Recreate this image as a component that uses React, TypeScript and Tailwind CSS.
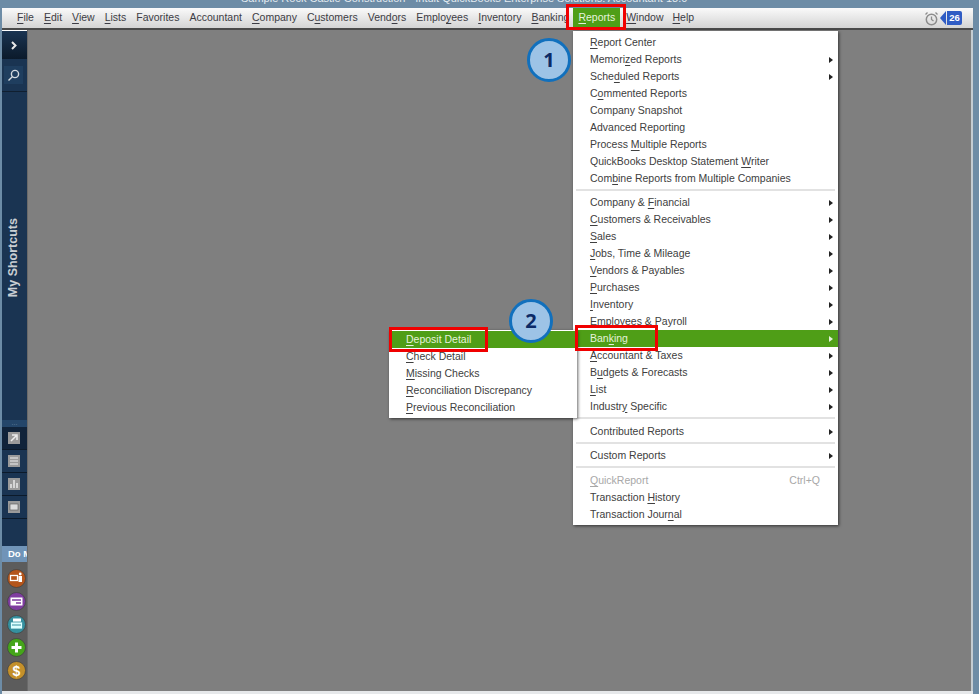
import React from "react";

type Entry = { label: string; u?: number; sub?: boolean; active?: boolean; disabled?: boolean; hint?: string };

const topMenu: Array<[string, number]> = [
  ["File", 0], ["Edit", 0], ["View", 0], ["Lists", 0], ["Favorites", -1], ["Accountant", -1],
  ["Company", 0], ["Customers", 1], ["Vendors", 4], ["Employees", 5], ["Inventory", 0], ["Banking", 0],
];

const groups: Entry[][] = [
  [
    { label: "Report Center", u: 0 },
    { label: "Memorized Reports", u: 6, sub: true },
    { label: "Scheduled Reports", u: 4, sub: true },
    { label: "Commented Reports", u: 1 },
    { label: "Company Snapshot" },
    { label: "Advanced Reporting" },
    { label: "Process Multiple Reports", u: 8 },
    { label: "QuickBooks Desktop Statement Writer", u: 29 },
    { label: "Combine Reports from Multiple Companies", u: 3 },
  ],
  [
    { label: "Company & Financial", u: 10, sub: true },
    { label: "Customers & Receivables", u: 0, sub: true },
    { label: "Sales", u: 0, sub: true },
    { label: "Jobs, Time & Mileage", u: 0, sub: true },
    { label: "Vendors & Payables", u: 0, sub: true },
    { label: "Purchases", u: 0, sub: true },
    { label: "Inventory", u: 0, sub: true },
    { label: "Employees & Payroll", u: 0, sub: true },
    { label: "Banking", u: 3, sub: true, active: true },
    { label: "Accountant & Taxes", u: 0, sub: true },
    { label: "Budgets & Forecasts", u: 1, sub: true },
    { label: "List", u: 0, sub: true },
    { label: "Industry Specific", u: 7, sub: true },
  ],
  [{ label: "Contributed Reports", sub: true }],
  [{ label: "Custom Reports", sub: true }],
  [
    { label: "QuickReport", u: 0, disabled: true, hint: "Ctrl+Q" },
    { label: "Transaction History", u: 12 },
    { label: "Transaction Journal", u: 16 },
  ],
];

const bankingItems: Entry[] = [
  { label: "Deposit Detail", u: 0, active: true },
  { label: "Check Detail", u: 0 },
  { label: "Missing Checks", u: 0 },
  { label: "Reconciliation Discrepancy", u: 0 },
  { label: "Previous Reconciliation", u: 0 },
];

const Mnemonic = ({ text, u }: { text: string; u?: number }) => {
  if (u === undefined || u < 0) return <span>{text}</span>;
  return (
    <span>
      {text.slice(0, u)}
      <span className="underline underline-offset-2">{text[u]}</span>
      {text.slice(u + 1)}
    </span>
  );
};

const Row = ({ item }: { item: Entry }) => (
  <div
    className={`flex h-[17px] items-center justify-between pr-[5px] pl-[17px] ${
      item.active ? "bg-[#4f9e17] text-[#e6f2dc]" : item.disabled ? "text-[#a8a8a8]" : "text-[#404040]"
    }`}
  >
    <Mnemonic text={item.label} u={item.u} />
    {item.sub && <span className={`h-0 w-0 border-y-[3.5px] border-l-[4px] border-y-transparent ${item.active ? "border-l-[#e6f2dc]" : "border-l-[#222]"}`} />}
    {item.hint && <span className="pr-[13px]">{item.hint}</span>}
  </div>
);

const Badge = ({ n, className }: { n: number; className: string }) => (
  <div
    className={`absolute flex h-[44px] w-[44px] items-center justify-center rounded-full border-[3px] border-[#1170bd] bg-[#9dc3e6] font-['Open_Sans',sans-serif] text-[20px] font-bold text-[#0c2a66] ${className}`}
  >
    {n}
  </div>
);

const RedBox = ({ className }: { className: string }) => (
  <div className={`pointer-events-none absolute border-[3px] border-[#f00000] ${className}`} />
);

const ToolIcon = ({ children, active }: { children: React.ReactNode; active?: boolean }) => (
  <div className={`flex h-[23px] items-center justify-center border-b border-[#0c1a2a] pr-[2px] ${active ? "bg-[#10233a]" : ""}`}>
    <svg width="12" height="12" viewBox="0 0 12 12">
      <rect width="12" height="12" fill="#9a9a9a" />
      {children}
    </svg>
  </div>
);

const RoundIcon = ({ bg, children }: { bg: string; children: React.ReactNode }) => (
  <svg width="19" height="19" viewBox="0 0 19 19">
    <circle cx="9.5" cy="9.5" r="9" fill={bg} stroke="#3a3a3a" strokeWidth="0.6" />
    {children}
  </svg>
);

export default function App() {
  return (
    <div className="relative flex h-[694px] w-[979px] flex-col overflow-hidden bg-[#6d8ca6] font-['Liberation_Sans',Arial,sans-serif] text-[10.5px]">
      {/* title bar, cut off by the screenshot */}
      <div className="relative h-[8px] shrink-0 overflow-hidden">
        <div className="absolute top-[-9px] left-[241px] whitespace-nowrap text-[11px] leading-[14px] text-[#e4ebf1]">
          Sample Rock Castle Construction - Intuit QuickBooks Enterprise Solutions: Accountant 18.0
        </div>
      </div>

      <div className="flex min-h-0 flex-1 flex-col pr-[6px] pl-[2px]">
        <div className="flex h-[22px] shrink-0 items-center border-b-2 border-[#4a4a4a] bg-gradient-to-b from-[#fafafa] to-[#d4d4d4] pl-[15px] text-[#3c3c44]">
          <div className="flex items-center gap-[10px]">
            {topMenu.map(([name, u]) => (
              <Mnemonic key={name} text={name} u={u} />
            ))}
          </div>
          <div className="ml-[4px] flex h-[20px] items-center bg-[#4f9e17] px-[5px] text-[#e6f2dc]">
            <Mnemonic text="Reports" u={0} />
          </div>
          <div className="ml-[6px] flex items-center gap-[9px]">
            <Mnemonic text="Window" u={0} />
            <Mnemonic text="Help" u={0} />
          </div>
          <div className="ml-auto mr-[11px] flex items-center gap-[1px]">
            <svg width="15" height="15" viewBox="0 0 15 15" fill="none" stroke="#8c8c8c">
              <circle cx="7.5" cy="8.5" r="5.2" strokeWidth="1.5" />
              <path d="M7.5 5.5v3l2 1.5M1.5 3.5l2-2M13.5 3.5l-2-2" strokeWidth="1.3" />
            </svg>
            <svg width="6" height="14" viewBox="0 0 6 14">
              <path d="M6 0v14L0 7z" fill="#2f5cc4" />
            </svg>
            <div className="flex h-[14px] w-[15px] items-center justify-center rounded-r-[2px] bg-[#2f5cc4] text-[9.5px] font-bold text-white">
              26
            </div>
          </div>
        </div>

        <div className="flex min-h-0 flex-1">
          <div className="flex w-[25px] shrink-0 flex-col border-t border-white bg-[#1a3452]">
            <div className="flex h-[28px] items-center justify-center bg-gradient-to-b from-[#1a3452] to-[#0b1a2b] pr-[2px]">
              <svg width="8" height="9" viewBox="0 0 8 9" fill="none" stroke="#e8e8e8" strokeWidth="2">
                <path d="M2 1l3.5 3.5L2 8" />
              </svg>
            </div>
            <div className="flex h-[33px] items-center justify-center border-b border-[#101f30] pr-[2px]">
              <div className="flex h-[18px] w-[19px] items-center justify-center bg-[#1f3e5f]">
                <svg width="13" height="13" viewBox="0 0 13 13" fill="none" stroke="#d5dbe0" strokeWidth="1.4">
                  <circle cx="8" cy="5" r="3.6" />
                  <path d="M5.3 7.7L1.5 11.5" />
                </svg>
              </div>
            </div>
            <div className="flex h-[205px] items-end justify-center pr-[2px]">
              <span className="rotate-180 whitespace-nowrap text-[12.5px] font-bold text-[#c9ced3] [writing-mode:vertical-rl]">My Shortcuts</span>
            </div>
            <div className="h-[123px]" />
            <div className="flex h-[7px] items-center justify-center bg-[#24466a] text-[6px] leading-none text-[#8fa5ba]">···</div>
            <ToolIcon active>
              <path d="M3 9l5-5M4 3h5v5" stroke="#eee" strokeWidth="1.5" fill="none" />
            </ToolIcon>
            <ToolIcon>
              <path d="M2 3h8M2 6h8M2 9h8" stroke="#eee" strokeWidth="1.2" />
            </ToolIcon>
            <ToolIcon>
              <path d="M3 10V6M6 10V2M9 10V5" stroke="#eee" strokeWidth="1.4" />
            </ToolIcon>
            <ToolIcon>
              <rect x="2" y="3" width="8" height="6" fill="#ddd" stroke="#555" strokeWidth="0.6" />
            </ToolIcon>
            <div className="h-[27px]" />
            <div className="flex h-[16px] items-center overflow-hidden whitespace-nowrap bg-[#7094b8] pl-[6px] text-[9.5px] font-bold text-white">
              Do More
            </div>
            <div className="flex flex-1 flex-col items-center gap-[4px] bg-[#5c5c5c] pt-[7px] pl-[3px]">
              <RoundIcon bg="#b4551b">
                <rect x="3.5" y="6.5" width="7" height="5" fill="none" stroke="#fff" strokeWidth="1.3" />
                <rect x="11.5" y="7" width="3.5" height="6" fill="#fff" />
                <circle cx="13.2" cy="5" r="1.4" fill="#fff" />
              </RoundIcon>
              <RoundIcon bg="#7f3da0">
                <rect x="3.5" y="5.5" width="12" height="8" fill="#fff" />
                <path d="M5 8h9M9 11h5" stroke="#7f3da0" strokeWidth="1.3" />
              </RoundIcon>
              <RoundIcon bg="#35909f">
                <rect x="6" y="3.5" width="8" height="4" fill="#fff" />
                <rect x="3.5" y="7" width="12" height="7" fill="#dff" stroke="#35909f" strokeWidth="0.8" />
                <path d="M5 10h9" stroke="#35909f" />
              </RoundIcon>
              <RoundIcon bg="#45a51a">
                <path d="M9.5 4.5v10M4.5 9.5h10" stroke="#fff" strokeWidth="3" />
              </RoundIcon>
              <RoundIcon bg="#c4902a">
                <text x="9.5" y="14.5" textAnchor="middle" fontSize="14" fontWeight="bold" fill="#fff" fontFamily="Liberation Sans">$</text>
              </RoundIcon>
            </div>
          </div>

          <div className="flex-1 border-l border-[#6a6a6a] bg-[#7f7f7f]" />
          <div className="w-[2px] bg-[#c4ccd2]" />
        </div>
        <div className="h-[3px] shrink-0 bg-[#e6e8ea]" />
      </div>

      {/* open menus */}
      <div className="absolute top-[31px] left-[573px] w-[265px] bg-white pt-[3px] pb-[2px] shadow-[1px_1px_3px_rgba(0,0,0,0.6)]">
        {groups.map((group, i) => (
          <div key={i}>
            {i > 0 && <div className={`mx-[3px] border-t-2 border-[#e2e2e2] ${i === 2 || i === 4 ? "mt-[2px] mb-[4px]" : "mt-[2px] mb-[3px]"}`} />}
            {group.map((item) => (
              <Row key={item.label} item={item} />
            ))}
          </div>
        ))}
      </div>

      <div className="absolute top-[330px] left-[389px] w-[188px] border-t border-white bg-white pb-[2px] shadow-[1px_1px_3px_rgba(0,0,0,0.6)]">
        {bankingItems.map((item) => (
          <Row key={item.label} item={item} />
        ))}
      </div>

      <RedBox className="top-[4px] left-[566px] h-[26px] w-[60px]" />
      <RedBox className="top-[327px] left-[389px] h-[25px] w-[99px]" />
      <RedBox className="top-[325px] left-[575px] h-[26px] w-[83px]" />
      <Badge n={1} className="top-[38px] left-[527px]" />
      <Badge n={2} className="top-[299px] left-[509px]" />
    </div>
  );
}
